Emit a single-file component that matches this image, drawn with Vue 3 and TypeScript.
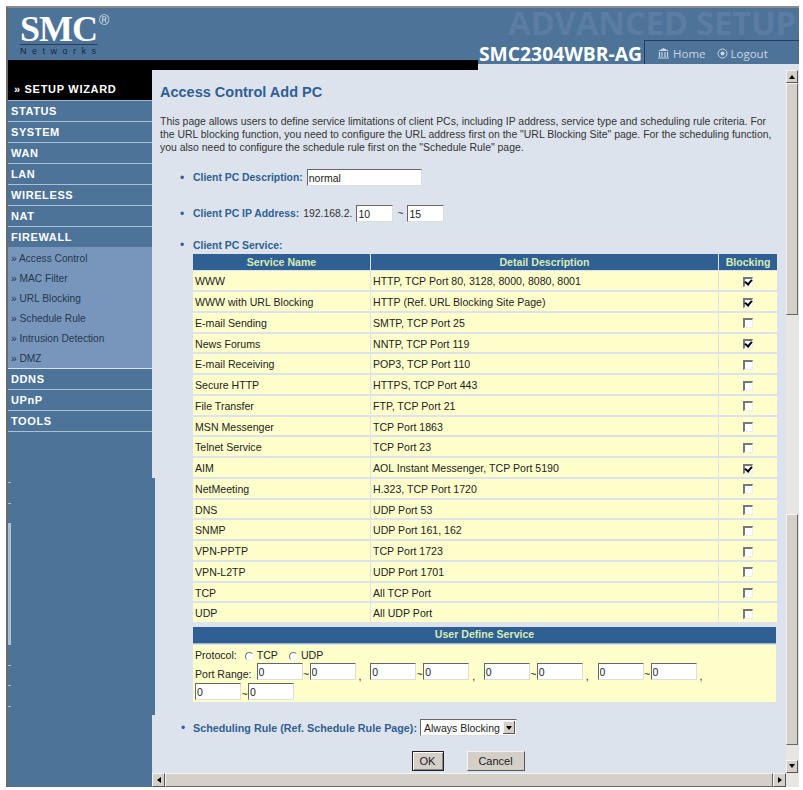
<template>
  <div class="window">
    <div class="top">
      <div class="brand">
        <div class="logo-box">
          <div class="logo">
            <div class="logo-name">SMC<sup>®</sup></div>
            <div class="logo-sub">Networks</div>
          </div>
        </div>
        <div class="black-band"></div>
      </div>
      <div class="top-right">
        <div class="ghost">ADVANCED SETUP</div>
        <div class="model-row">
          <span class="model">SMC2304WBR-AG</span>
          <div class="tab">
            <a class="tab-link">
              <svg width="13" height="12" viewBox="0 0 13 12">
                <path d="M1 4 L6.5 1 L12 4 Z" fill="#c9d6e4" />
                <path d="M2.5 5v5M5 5v5M8 5v5M10.5 5v5M1 11h11" stroke="#c9d6e4" stroke-width="1.2" fill="none" />
              </svg>
              Home
            </a>
            <a class="tab-link">
              <svg width="11" height="11" viewBox="0 0 11 11">
                <circle cx="5.5" cy="5.5" r="4.5" stroke="#c9d6e4" fill="none" />
                <circle cx="5.5" cy="5.5" r="2" fill="#c9d6e4" />
              </svg>
              Logout
            </a>
          </div>
        </div>
      </div>
    </div>

    <div class="middle">
      <div class="sidebar">
        <div class="wizard">» SETUP WIZARD</div>
        <template v-for="item in menu" :key="item">
          <div class="menu-item">{{ item }}</div>
          <div v-if="item == 'FIREWALL'" class="submenu">
            <div class="sub-item" v-for="sub in submenu" :key="sub">» {{ sub }}</div>
          </div>
        </template>
        <div class="side-gap"></div>
        <div class="side-step">
          <i class="tick" v-for="(h, i) in ticks" :key="i" :style="{ height: h + 'px' }"></i>
        </div>
        <div class="side-end"></div>
      </div>

      <div class="pane">
        <div class="pane-row">
          <div class="content">
            <h1>Access Control Add PC</h1>
            <p class="intro">
              This page allows users to define service limitations of client PCs, including IP address, service type and scheduling rule criteria. For<br />
              the URL blocking function, you need to configure the URL address first on the "URL Blocking Site" page. For the scheduling function,<br />
              you also need to configure the schedule rule first on the "Schedule Rule" page.
            </p>
            <ul class="form-list">
              <li class="desc">
                <b>Client PC Description:</b>
                <input class="txt desc-input" type="text" value="normal" />
              </li>
              <li class="ip">
                <b>Client PC IP Address:</b>
                <span>192.168.2.</span>
                <input class="txt ip-input" type="text" value="10" />
                <span>~</span>
                <input class="txt ip-input" type="text" value="15" />
              </li>
              <li class="svc">
                <b>Client PC Service:</b>
              </li>
            </ul>

            <table class="services">
              <thead>
                <tr>
                  <th class="c1">Service Name</th>
                  <th class="c2">Detail Description</th>
                  <th class="c3">Blocking</th>
                </tr>
              </thead>
              <tbody>
                <tr v-for="row in services" :key="row.name">
                  <td>{{ row.name }}</td>
                  <td>{{ row.detail }}</td>
                  <td class="center"><input class="chk" type="checkbox" :checked="row.blocked" /></td>
                </tr>
              </tbody>
            </table>

            <div class="user-head">User Define Service</div>
            <div class="user-body">
              <div class="proto">
                Protocol:
                <label class="radio-label"><input class="rad" type="radio" name="proto" />TCP</label>
                <label class="radio-label"><input class="rad" type="radio" name="proto" />UDP</label>
              </div>
              <div class="ports">
                <span class="port-label">Port Range:</span>
                <span class="port-pair" v-for="n in 4" :key="n">
                  <input class="txt port" type="text" value="0" /><span class="tilde">~</span><input class="txt port" type="text" value="0" /><span class="comma">,</span>
                </span>
                <span class="port-pair">
                  <input class="txt port" type="text" value="0" /><span class="tilde">~</span><input class="txt port" type="text" value="0" />
                </span>
              </div>
            </div>

            <div class="sched">
              <span class="dot">•</span>
              <b>Scheduling Rule (Ref. Schedule Rule Page):</b>
              <div class="select">
                <span>Always Blocking</span>
                <span class="select-btn"><i class="arrow down"></i></span>
              </div>
            </div>

            <div class="buttons">
              <button class="btn ok">OK</button>
              <button class="btn cancel">Cancel</button>
            </div>
          </div>

          <div class="vbar">
            <div class="sb-btn"><i class="arrow up"></i></div>
            <div class="v-thumb first"></div>
            <div class="v-track"></div>
            <div class="v-thumb second"></div>
            <div class="v-track short"></div>
            <div class="sb-btn"><i class="arrow down"></i></div>
          </div>
        </div>

        <div class="hbar">
          <div class="sb-btn h"><i class="arrow left"></i></div>
          <div class="h-thumb"></div>
          <div class="sb-btn h"><i class="arrow right"></i></div>
          <div class="corner"></div>
        </div>
      </div>
    </div>
  </div>
</template>

<script setup lang="ts">
const menu: string[] = ['STATUS', 'SYSTEM', 'WAN', 'LAN', 'WIRELESS', 'NAT', 'FIREWALL', 'DDNS', 'UPnP', 'TOOLS']
const submenu: string[] = ['Access Control', 'MAC Filter', 'URL Blocking', 'Schedule Rule', 'Intrusion Detection', 'DMZ']

// 侧栏下半段左边的小刻度
const ticks: number[] = [1, 1, 122, 1, 1, 1]

interface Service {
  name: string
  detail: string
  blocked: boolean
}

const services: Service[] = [
  { name: 'WWW', detail: 'HTTP, TCP Port 80, 3128, 8000, 8080, 8001', blocked: true },
  { name: 'WWW with URL Blocking', detail: 'HTTP (Ref. URL Blocking Site Page)', blocked: true },
  { name: 'E-mail Sending', detail: 'SMTP, TCP Port 25', blocked: false },
  { name: 'News Forums', detail: 'NNTP, TCP Port 119', blocked: true },
  { name: 'E-mail Receiving', detail: 'POP3, TCP Port 110', blocked: false },
  { name: 'Secure HTTP', detail: 'HTTPS, TCP Port 443', blocked: false },
  { name: 'File Transfer', detail: 'FTP, TCP Port 21', blocked: false },
  { name: 'MSN Messenger', detail: 'TCP Port 1863', blocked: false },
  { name: 'Telnet Service', detail: 'TCP Port 23', blocked: false },
  { name: 'AIM', detail: 'AOL Instant Messenger, TCP Port 5190', blocked: true },
  { name: 'NetMeeting', detail: 'H.323, TCP Port 1720', blocked: false },
  { name: 'DNS', detail: 'UDP Port 53', blocked: false },
  { name: 'SNMP', detail: 'UDP Port 161, 162', blocked: false },
  { name: 'VPN-PPTP', detail: 'TCP Port 1723', blocked: false },
  { name: 'VPN-L2TP', detail: 'UDP Port 1701', blocked: false },
  { name: 'TCP', detail: 'All TCP Port', blocked: false },
  { name: 'UDP', detail: 'All UDP Port', blocked: false }
]
</script>

<style>
html, body {
  margin: 0;
  background: #fff;
}
</style>

<style scoped>
.window {
  box-sizing: border-box;
  width: 793px;
  height: 781px;
  margin: 6px 0 0 6px;
  border-top: 2px solid #8a8a8a;
  border-left: 2px solid #6a6a6a;
  display: flex;
  flex-direction: column;
  font-family: "Liberation Sans", Arial, sans-serif;
  font-size: 10.5px;
  color: #333;
  overflow: hidden;
}

.top {
  display: flex;
  height: 62px;
  background: #dce3ed;
  flex: none;
}
.brand {
  width: 470px;
  display: flex;
  flex-direction: column;
}
.logo-box {
  height: 52px;
  background: #4d7399;
  padding: 7px 0 0 12px;
  box-sizing: border-box;
}
.logo {
  width: 78px;
  color: #fff;
}
.logo-name {
  font-family: "Liberation Serif", serif;
  font-weight: bold;
  font-size: 36px;
  line-height: 28px;
  height: 30px;
  box-sizing: border-box;
  letter-spacing: -1px;
  white-space: nowrap;
  border-bottom: 1px solid #23415f;
}
.logo-name sup {
  font-family: "Liberation Sans", sans-serif;
  font-weight: normal;
  font-size: 14px;
  line-height: 0;
  vertical-align: 16px;
  margin-left: 2px;
  color: #d6e0ea;
}
.logo-sub {
  color: #12263b;
  font-size: 9px;
  letter-spacing: 5.5px;
  line-height: 12px;
  white-space: nowrap;
}
.black-band {
  flex: 1;
  background: #000;
}
.top-right {
  flex: 1;
  height: 56px;
  background: #4d7399;
  display: flex;
  flex-direction: column;
}
.ghost {
  font-family: "Open Sans", sans-serif;
  font-weight: bold;
  font-size: 33px;
  line-height: 30px;
  height: 32px;
  letter-spacing: -0.3px;
  color: #5a7da1;
  white-space: nowrap;
  padding-left: 30px;
}
.model-row {
  display: flex;
  align-items: flex-end;
  height: 24px;
}
.model {
  width: 166px;
  flex: none;
  color: #fff;
  font-family: "Open Sans", sans-serif;
  font-weight: bold;
  font-size: 19.3px;
  line-height: 20px;
  padding-left: 1px;
  box-sizing: border-box;
  white-space: nowrap;
}
.tab {
  flex: 1;
  height: 24px;
  box-sizing: border-box;
  border-top: 1px solid #1f3f60;
  border-left: 1px solid #1f3f60;
  display: flex;
  align-items: center;
  gap: 11px;
  padding: 1px 0 0 12px;
}
.tab-link {
  color: #c9d6e4;
  font-family: "Open Sans", sans-serif;
  font-size: 11.5px;
  display: flex;
  align-items: center;
  gap: 3px;
}

.middle {
  flex: 1;
  display: flex;
  min-height: 0;
}
.sidebar {
  width: 144px;
  flex: none;
  display: flex;
  flex-direction: column;
  background: #4d7399;
}
.wizard {
  height: 30px;
  line-height: 38px;
  background: #000;
  color: #fff;
  font-weight: bold;
  font-size: 11px;
  letter-spacing: 0.7px;
  padding-left: 6px;
  border-bottom: 1px solid #9db5cd;
  flex: none;
}
.menu-item {
  height: 20px;
  line-height: 21px;
  color: #fff;
  font-weight: bold;
  font-size: 11px;
  letter-spacing: 0.6px;
  padding-left: 3px;
  background: #4d7399;
  border-bottom: 1px solid #a9c0d6;
  flex: none;
}
.submenu {
  background: #7896bc;
  height: 122px;
  flex: none;
  border-bottom: 1px solid #d6e2ee;
  box-sizing: border-box;
  margin-top: -1px;
  padding-top: 2px;
}
.sub-item {
  height: 20px;
  line-height: 20px;
  color: #26384d;
  font-size: 10.2px;
  padding-left: 3px;
  white-space: nowrap;
}
.side-gap {
  height: 46px;
  flex: none;
}
.side-step {
  height: 237px;
  flex: none;
  margin-right: -3px;
  background: #4d7399;
  display: flex;
  flex-direction: column;
  gap: 19.5px;
  padding-top: 4px;
  box-sizing: border-box;
  position: relative;
}
.tick {
  display: block;
  width: 3px;
  background: #a9bfd4;
}
.side-end {
  flex: 1;
}

.pane {
  flex: 1;
  min-width: 0;
  display: flex;
  flex-direction: column;
  background: #dce3ed;
}
.pane-row {
  flex: 1;
  display: flex;
  min-height: 0;
}
.content {
  flex: 1;
  min-width: 0;
  padding: 13px 0 0 8px;
  overflow: hidden;
}
h1 {
  margin: 0 0 15px;
  font-size: 14.5px;
  line-height: 18px;
  color: #2f5f93;
}
.intro {
  margin: 0;
  font-size: 10.45px;
  line-height: 12.8px;
  color: #333;
  white-space: nowrap;
}
.form-list {
  margin: 0;
  padding: 0 0 0 33px;
  list-style: none;
  font-size: 10.4px;
}
.form-list li {
  position: relative;
  display: flex;
  align-items: center;
  gap: 4px;
}
.form-list li::before {
  content: "•";
  position: absolute;
  left: -13px;
  color: #2f5f93;
  font-size: 12px;
}
.form-list b,
.sched b {
  color: #2f5f93;
}
.sched b {
  font-size: 10.75px;
  white-space: nowrap;
}
.desc {
  margin-top: 14px;
  height: 19px;
}
.ip {
  margin-top: 17px;
  height: 19px;
}
.svc {
  margin-top: 15px;
  height: 14px;
}
.txt {
  box-sizing: border-box;
  height: 17px;
  padding: 0 1px;
  background: #fff;
  border: 1px solid;
  border-color: #666 #ddd #ddd #666;
  font-family: "Liberation Sans", Arial, sans-serif;
  font-size: 10.5px;
  color: #222;
  outline: none;
}
.desc-input {
  width: 115px;
}
.ip-input {
  width: 37px;
}

.services {
  margin: 2px 0 0 33px;
  width: 584px;
  border-collapse: separate;
  border-spacing: 0;
  table-layout: fixed;
  font-size: 10.6px;
}
.services th {
  height: 16px;
  padding: 0;
  background: #2f5f93;
  color: #d6ecb4;
  font-size: 10.6px;
  border-right: 1px solid #dce3ed;
  border-bottom: 1px solid #dce3ed;
}
.services th:last-child,
.services td:last-child {
  border-right: none;
}
.c1 {
  width: 177px;
}
.c3 {
  width: 58px;
}
.services td {
  height: 17.75px;
  padding: 1px 0 0 2px;
  background: #ffffcc;
  color: #222;
  border-right: 1px solid #dce3ed;
  border-bottom: 2px solid #dce3ed;
  white-space: nowrap;
}
.services td.center {
  text-align: center;
  padding: 0;
  height: 18.75px;
}
.chk,
.rad {
  appearance: none;
  margin: 0;
  box-sizing: border-box;
  position: relative;
  background: #fff;
  border: solid;
  border-color: #777 #eee #eee #777;
  vertical-align: middle;
}
.chk {
  width: 10px;
  height: 10px;
  border-width: 2px 1px 1px 2px;
}
.chk:checked::after {
  content: "";
  position: absolute;
  left: 1px;
  top: -1px;
  width: 3px;
  height: 5px;
  border: solid #000;
  border-width: 0 2px 2px 0;
  transform: rotate(40deg);
}
.rad {
  width: 9px;
  height: 9px;
  border-width: 1px;
  border-radius: 50%;
  margin: 0 3px 0 5px;
}

.user-head {
  margin: 3px 0 0 33px;
  width: 583px;
  height: 16px;
  line-height: 15px;
  background: #2f5f93;
  color: #d6ecb4;
  font-weight: bold;
  font-size: 10.6px;
  text-align: center;
  border-bottom: 1px solid #9db5cd;
}
.user-body {
  margin: 1px 0 0 33px;
  width: 581px;
  height: 54px;
  padding: 3px 0 0 2px;
  background: #ffffcc;
  color: #222;
  font-size: 10.6px;
  line-height: 14px;
}
.proto {
  height: 15px;
}
.radio-label {
  margin-right: 6px;
}
.ports {
  display: flex;
  flex-wrap: wrap;
  align-items: flex-start;
}
.port-label {
  margin-right: 5px;
  padding-top: 4px;
}
.port-pair {
  display: inline-flex;
  align-items: flex-start;
  height: 20px;
}
.port {
  width: 46px;
}
.tilde {
  width: 7px;
  text-align: center;
  padding-top: 4px;
}
.comma {
  width: 14.67px;
  padding: 6px 0 0 3px;
  box-sizing: border-box;
}

.sched {
  margin: 16px 0 0 21px;
  display: flex;
  align-items: center;
  gap: 3px;
  height: 19px;
}
.dot {
  color: #2f5f93;
  font-size: 12px;
  width: 9px;
  flex: none;
}
.select {
  display: flex;
  align-items: center;
  box-sizing: border-box;
  height: 17px;
  width: 97px;
  padding-left: 3px;
  background: #fff;
  border: 1px solid;
  border-color: #666 #ddd #ddd #666;
  color: #222;
  justify-content: space-between;
  white-space: nowrap;
}
.select-btn {
  width: 12px;
  height: 13px;
  margin-right: 1px;
  display: flex;
  align-items: center;
  justify-content: center;
  background: #d4d0c8;
  box-shadow: inset -1px -1px 0 #555, inset 1px 1px 0 #f4f4f4;
}
.buttons {
  display: flex;
  justify-content: center;
  gap: 23px;
  margin: 14px 0 0 2px;
  padding-right: 12px;
}
.btn {
  height: 20px;
  padding: 0;
  background: #d4d0c8;
  color: #222;
  font-family: "Liberation Sans", Arial, sans-serif;
  font-size: 11px;
  border: 1px solid;
  border-color: #f4f4f4 #555 #555 #f4f4f4;
}
.ok {
  width: 32px;
  border-color: #222;
  box-shadow: inset 1px 1px 0 #fff, inset -1px -1px 0 #888;
}
.cancel {
  width: 58px;
}

.vbar {
  width: 12px;
  flex: none;
  margin-right: 1px;
  display: flex;
  flex-direction: column;
  background: #e7e6e2;
}
.sb-btn {
  height: 13px;
  flex: none;
  display: flex;
  align-items: center;
  justify-content: center;
  background: #d4d0c8;
  box-sizing: border-box;
  border: 1px solid;
  border-color: #f4f4f4 #555 #555 #f4f4f4;
}
.v-thumb {
  background: #d4d0c8;
  box-sizing: border-box;
  border: 1px solid;
  border-color: #f4f4f4 #666 #666 #f4f4f4;
}
.first {
  height: 233px;
}
.second {
  height: 232px;
}
.v-track {
  height: 199px;
}
.v-track.short {
  height: 15px;
}
.arrow {
  display: block;
  width: 0;
  height: 0;
  border: 3px solid transparent;
}
.arrow.up {
  border-top: 0;
  border-bottom: 4px solid #000;
}
.arrow.down {
  border-bottom: 0;
  border-top: 4px solid #000;
}
.arrow.left {
  border-left: 0;
  border-right: 4px solid #000;
}
.arrow.right {
  border-right: 0;
  border-left: 4px solid #000;
}

.hbar {
  height: 14px;
  flex: none;
  display: flex;
  background: #d4d0c8;
}
.sb-btn.h {
  width: 13px;
  height: 14px;
}
.h-thumb {
  flex: 1;
  box-sizing: border-box;
  border: 1px solid;
  border-color: #f4f4f4 #666 #666 #f4f4f4;
}
.corner {
  width: 13px;
  background: #e7e6e2;
}
</style>
